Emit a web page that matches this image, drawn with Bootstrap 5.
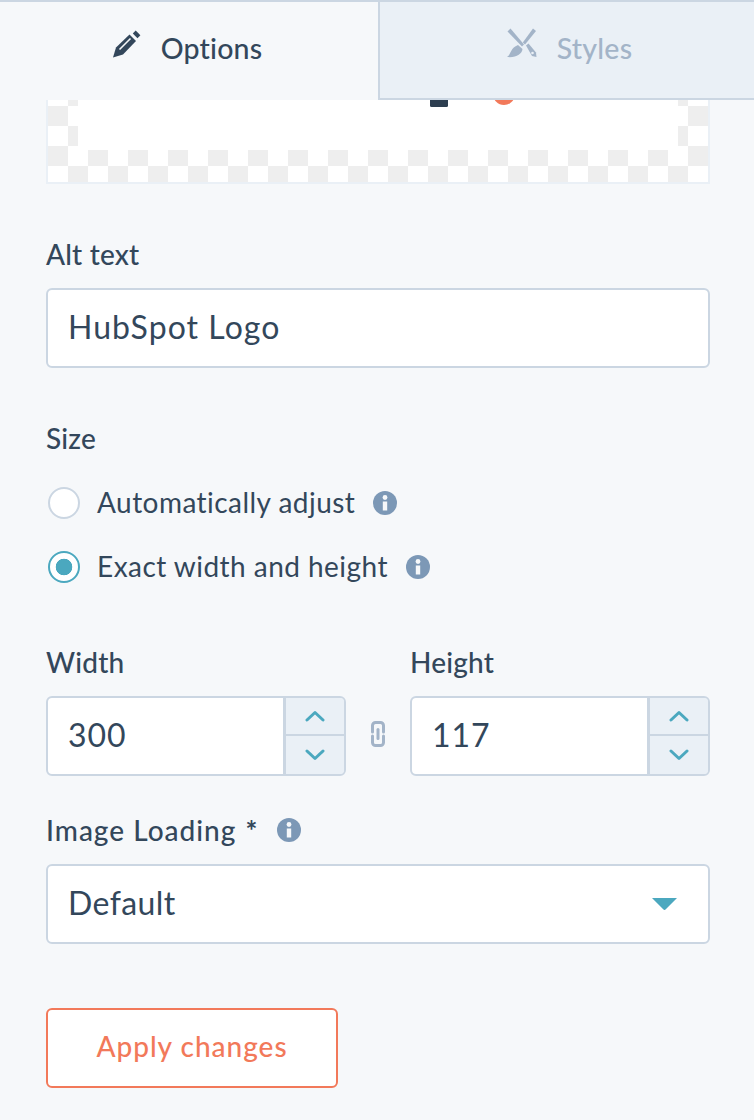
<!DOCTYPE html>
<html lang="en">
<head>
<meta charset="utf-8">
<title>Image options</title>
<link href="https://cdn.jsdelivr.net/npm/bootstrap@5.3.0/dist/css/bootstrap.min.css" rel="stylesheet">
<style>
body{background:#f6f8fa;color:#33475b;font-family:Lato,"Liberation Sans",sans-serif;font-size:28px;width:754px;height:1120px;overflow:hidden}
.tabbar{height:100px;border-top:2px solid #cbd6e2}
.tabbar .nav-link{flex:0 0 auto;height:98px;display:flex;align-items:center;justify-content:center;gap:20px;font-size:28.5px;letter-spacing:.2px;font-weight:500;padding:0 0 4px;border-radius:0}
.tabbar .nav-link svg{margin-bottom:10px}
.tabbar .nav-link.tab-on{width:378px;background:#f6f8fa;color:#33475b;padding:0 3px 6px 0}
.tabbar .nav-link.tab-on svg{margin-bottom:8px}
.tabbar .nav-link.tab-off{width:376px;background:#eaf0f6;color:#a3b4c8;border-left:2px solid #cbd6e2;border-bottom:2px solid #cbd6e2;padding-left:5px}
.pane{padding:0 44px 0 46px}
.checker{height:84px;border:2px solid #eaf0f6;border-top:0;background-color:#fff;background-image:conic-gradient(#eee 25%,#fff 0 50%,#eee 0 75%,#fff 0);background-size:40px 40px;background-position:-20px 6px;padding:0 30px}
.checker svg{display:block;background:#fff}
.fld-label{display:block;font-size:28px;letter-spacing:.2px;font-weight:500;line-height:40px;margin:0 0 14px;color:#33475b}
.fld-input,.fld-input:focus{height:80px;border:2px solid #cbd6e2;border-radius:6px;background-color:#fff;color:#33475b;font-size:32px;letter-spacing:1.05px;padding:0 20px 3px;box-shadow:none}
.gap-alt{margin-top:50px}
.radio-row{display:flex;align-items:center;height:40px;min-height:0;padding:0 0 0 2px;margin:0;gap:17px}
.radio-row .form-check-input{float:none;margin:0;width:32px;height:32px;flex:none;border:2px solid #cbd6e2;background-color:#fff;background-image:none}
.radio-row .form-check-input:checked{border-color:#4ba8bf;background-color:#fff;background-image:radial-gradient(circle,#4ba8bf 0 8px,transparent 8.6px)}
.radio-row .form-check-label{font-size:28px;letter-spacing:.46px;margin:-2px 1px 0 0}
.radio-list{margin-top:25px;display:flex;flex-direction:column;gap:24px}
.size-label{margin-bottom:0}
.dims{margin-top:55px;display:flex;align-items:flex-end}
.dim-col{width:300px;flex:none}
.link-slot{width:64px;height:76px;margin-bottom:4px;display:flex;align-items:center;justify-content:center;flex:none}
.stepper{width:62px;flex:none;display:flex;flex-direction:column;border:2px solid #cbd6e2;border-radius:0 6px 6px 0;background:#eaf0f6;overflow:hidden;margin-left:-2px}
.stepper .btn{border:0;border-radius:0;padding:0;display:flex;align-items:center;justify-content:center;background:#eaf0f6;height:36px;flex:none}
.stepper .btn+.btn{border-top:2px solid #cbd6e2;height:40px}
.dims .fld-input{border-radius:6px 0 0 6px;letter-spacing:.9px}
.load-wrap{margin-top:34px}
.inline-label{display:flex;align-items:center;gap:19px;letter-spacing:1px}
.req-mark{font-weight:700;margin-left:1px}
.select-wrap{position:relative}
.select-wrap .fld-input{background-image:none;appearance:none;letter-spacing:.4px}
.caret-ic{position:absolute;left:606px;top:34px}
.apply-btn,.apply-btn:hover{display:block;margin-top:64px;width:292px;height:80px;padding:0 0 5px;border:2px solid #f2795a;border-radius:6px;background:#fff;color:#f2795a;font-size:28px;letter-spacing:1px;font-weight:500}
</style>
</head>
<body>
<nav class="nav tabbar">
  <a class="nav-link tab-on" href="#">
    <svg width="28" height="28" viewBox="0 0 28 28" aria-hidden="true"><path fill="#33475b" d="M0 27.500 3 17.500 16.500 4.500 23 11 10 24.500Z"/><path fill="none" stroke="#f6f8fa" stroke-width="1.600" d="M6.500 19.500 17.500 8.500"/><path fill="#33475b" d="M22.700 0.600 27.400 5.300 24.500 8.200 19.800 3.500Z"/></svg>
    <span>Options</span>
  </a>
  <a class="nav-link tab-off" href="#">
    <svg width="30" height="30" viewBox="0 0 30 30" aria-hidden="true"><g fill="#a3b4c8"><path d="M0.500 3.500 3.500 0.500 17 16.500 15 18.500Z"/><path d="M26 0.500 29 3 18 16.500 15.800 14.500Z"/><path d="M11 17 15.500 21C15 26 9 30 0 29C4 27 3 20 11 17Z"/><path d="M19 17.500 21.500 15.500 29 24.500 29.500 29 25 28Z"/></g><circle cx="25.500" cy="25" r="1.300" fill="#eaf0f6"/></svg>
    <span>Styles</span>
  </a>
</nav>
<main class="pane">
  <div class="checker">
    <svg width="600" height="50" viewBox="0 0 600 50" aria-hidden="true"><rect x="352" y="-6" width="18" height="13" rx="1.500" fill="#2d3e50"/><circle cx="426" cy="-6" r="11" fill="#f2795a"/></svg>
  </div>

  <div class="gap-alt">
    <label class="fld-label" for="altText">Alt text</label>
    <input id="altText" class="form-control fld-input" type="text" value="HubSpot Logo">
  </div>

  <div class="gap-alt">
    <div class="fld-label size-label">Size</div>
    <div class="radio-list">
      <div class="form-check radio-row">
        <input class="form-check-input" type="radio" name="sz" id="szAuto">
        <label class="form-check-label" for="szAuto">Automatically adjust</label>
        <svg width="24" height="24" viewBox="0 0 24 24" aria-hidden="true"><circle cx="12" cy="12" r="12" fill="#7c98b6"/><circle cx="12" cy="6.500" r="2.400" fill="#f6f8fa"/><rect x="9.800" y="10.500" width="4.400" height="9" fill="#f6f8fa"/></svg>
      </div>
      <div class="form-check radio-row">
        <input class="form-check-input" type="radio" name="sz" id="szExact" checked>
        <label class="form-check-label" for="szExact">Exact width and height</label>
        <svg width="24" height="24" viewBox="0 0 24 24" aria-hidden="true"><circle cx="12" cy="12" r="12" fill="#7c98b6"/><circle cx="12" cy="6.500" r="2.400" fill="#f6f8fa"/><rect x="9.800" y="10.500" width="4.400" height="9" fill="#f6f8fa"/></svg>
      </div>
    </div>
  </div>

  <div class="dims">
    <div class="dim-col">
      <label class="fld-label" for="wVal">Width</label>
      <div class="input-group flex-nowrap">
        <input id="wVal" class="form-control fld-input" type="text" value="300">
        <div class="stepper">
          <button class="btn" type="button" aria-label="Increase"><svg width="20" height="12" viewBox="0 0 20 12" aria-hidden="true"><path d="M2 10 10 2.500 18 10" fill="none" stroke="#4ba8bf" stroke-width="3" stroke-linecap="round" stroke-linejoin="round"/></svg></button>
          <button class="btn" type="button" aria-label="Decrease"><svg width="20" height="12" viewBox="0 0 20 12" aria-hidden="true"><path d="M2 2 10 9.500 18 2" fill="none" stroke="#4ba8bf" stroke-width="3" stroke-linecap="round" stroke-linejoin="round"/></svg></button>
        </div>
      </div>
    </div>
    <div class="link-slot">
      <svg width="14" height="26" viewBox="0 0 14 26" aria-hidden="true"><g fill="none" stroke="#a3b4c8" stroke-width="3" stroke-linecap="round"><path d="M1.500 11V4.500A3 3 0 0 1 4.500 1.500H9.500A3 3 0 0 1 12.500 4.500V11"/><path d="M1.500 15V21.500A3 3 0 0 0 4.500 24.500H9.500A3 3 0 0 0 12.500 21.500V15"/><path d="M7 8.500V17.500"/></g></svg>
    </div>
    <div class="dim-col">
      <label class="fld-label" for="hVal">Height</label>
      <div class="input-group flex-nowrap">
        <input id="hVal" class="form-control fld-input" type="text" value="117">
        <div class="stepper">
          <button class="btn" type="button" aria-label="Increase"><svg width="20" height="12" viewBox="0 0 20 12" aria-hidden="true"><path d="M2 10 10 2.500 18 10" fill="none" stroke="#4ba8bf" stroke-width="3" stroke-linecap="round" stroke-linejoin="round"/></svg></button>
          <button class="btn" type="button" aria-label="Decrease"><svg width="20" height="12" viewBox="0 0 20 12" aria-hidden="true"><path d="M2 2 10 9.500 18 2" fill="none" stroke="#4ba8bf" stroke-width="3" stroke-linecap="round" stroke-linejoin="round"/></svg></button>
        </div>
      </div>
    </div>
  </div>

  <div class="load-wrap">
    <label class="fld-label inline-label" for="loadSel"><span>Image Loading <span class="req-mark">*</span></span>
      <svg width="24" height="24" viewBox="0 0 24 24" aria-hidden="true"><circle cx="12" cy="12" r="12" fill="#7c98b6"/><circle cx="12" cy="6.500" r="2.400" fill="#f6f8fa"/><rect x="9.800" y="10.500" width="4.400" height="9" fill="#f6f8fa"/></svg>
    </label>
    <div class="select-wrap">
      <select id="loadSel" class="form-select fld-input"><option>Default</option></select>
      <svg class="caret-ic" width="25" height="12" viewBox="0 0 25 12" aria-hidden="true"><path d="M0 0H25L13.500 11.500A1.400 1.400 0 0 1 11.500 11.500Z" fill="#4ba8bf"/></svg>
    </div>
  </div>

  <button class="btn apply-btn" type="button">Apply changes</button>
</main>
<script src="https://cdn.jsdelivr.net/npm/bootstrap@5.3.0/dist/js/bootstrap.bundle.min.js"></script>
</body>
</html>
